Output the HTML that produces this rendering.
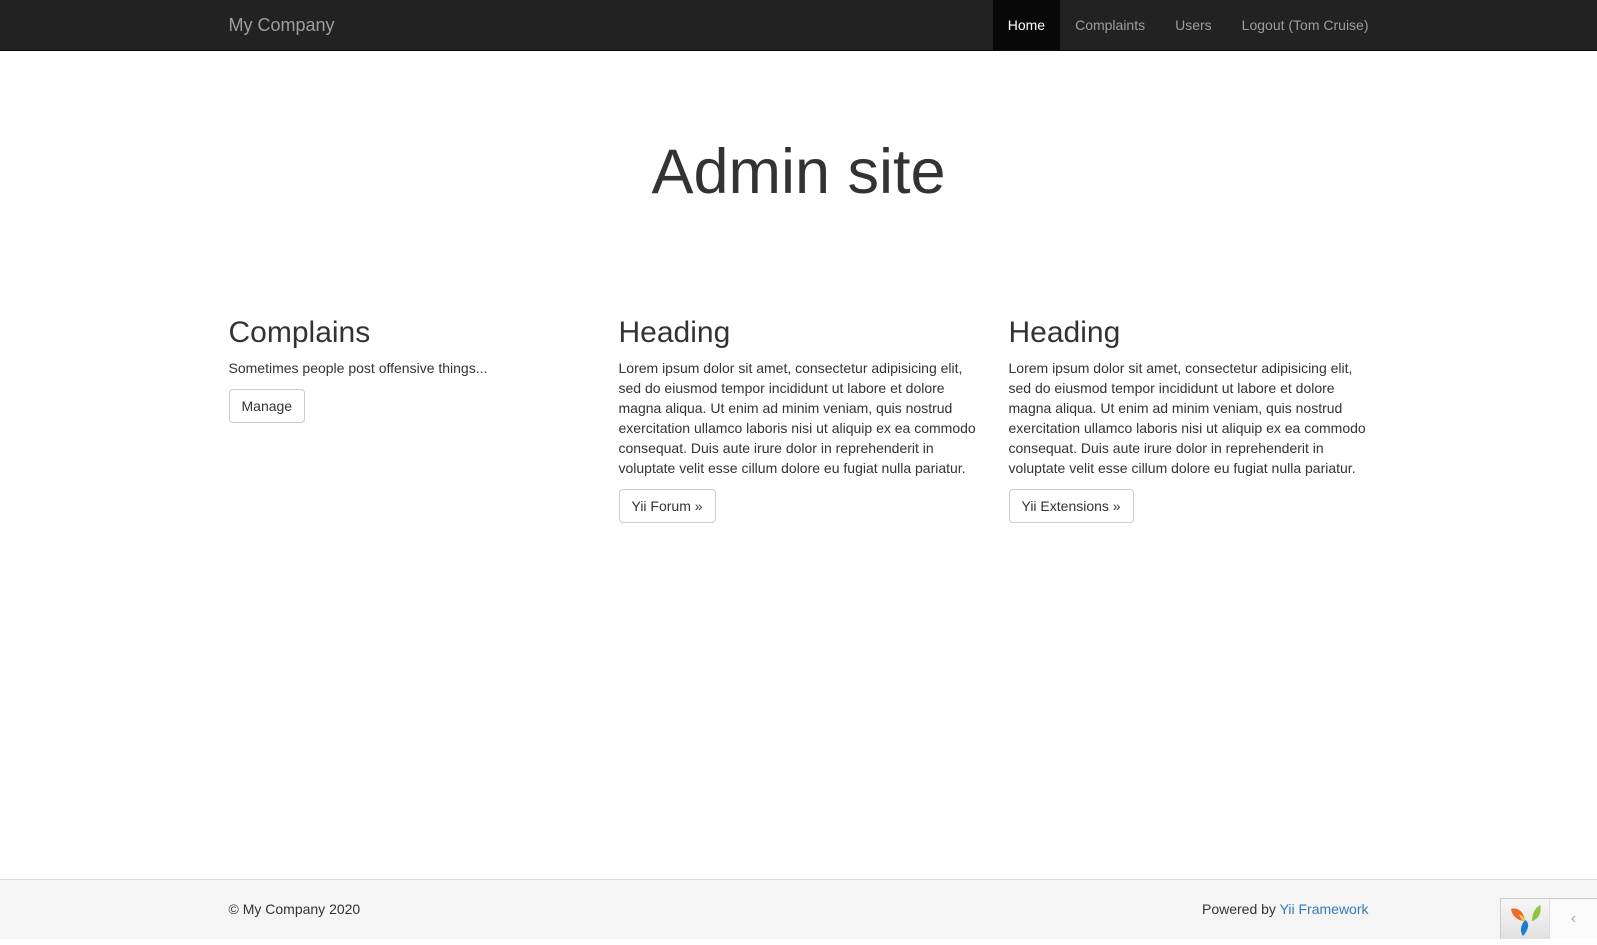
<!DOCTYPE html>
<html><head><meta charset="utf-8"><style>
*{box-sizing:border-box}
html,body{margin:0;height:100%}
body{font-family:"Liberation Sans",Helvetica,Arial,sans-serif;font-size:14px;line-height:1.42857;color:#333;background:#fff;position:relative;width:1597px;height:939px;overflow:hidden}
.nav{position:absolute;top:0;left:0;right:0;height:51px;background:#222;border-bottom:1px solid #080808}
.container{width:1170px;margin:0 auto;padding:0 15px;position:relative}
.brand{position:absolute;left:15px;top:0;height:50px;padding:15px 0;font-size:18px;line-height:20px;color:#9d9d9d}
.menu{position:absolute;right:0;top:0;display:flex}
.menu a{display:block;padding:15px;line-height:20px;color:#9d9d9d;text-decoration:none;height:50px}
.menu a.active{background:#080808;color:#fff}
.wrap{padding:70px 15px 20px}
.jumbo{text-align:center;padding:48px 0;margin-bottom:31px}
h1{font-size:63px;font-weight:500;line-height:1.1;margin:20px 0 10px}
.row{display:flex;margin:0 -15px}
.col{width:390px;padding:0 15px}
h2{font-size:30px;font-weight:500;line-height:1.1;margin:20px 0 10px}
p{margin:0 0 10px}
.btn{display:inline-block;padding:6px 12px;border:1px solid #ccc;border-radius:4px;color:#333;background:#fff;line-height:20px}
.footer{position:absolute;left:0;right:0;bottom:0;height:60px;background:#f5f5f5;border-top:1px solid #ddd;padding-top:20px}
.footer a{color:#337ab7;text-decoration:none}
.tb{position:absolute;right:0;bottom:0;height:41px;width:97px;display:flex;border:1px solid #ccc;border-right:0;border-bottom:0}
.tb div{width:48px;height:40px;background:linear-gradient(#f7f7f7,#e0e0e0)}
.tb div+div{background:#fafafa;border-left:1px solid #ddd;color:#aaa;text-align:center;line-height:40px;font-size:16px}
</style></head><body>
<div class="nav"><div class="container">
<div class="brand">My Company</div>
<div class="menu"><a class="active">Home</a><a>Complaints</a><a>Users</a><a>Logout (Tom Cruise)</a></div>
</div></div>
<div class="container wrap">
<div class="jumbo"><h1>Admin site</h1></div>
<div class="row">
<div class="col"><h2>Complains</h2><p>Sometimes people post offensive things...</p><span class="btn">Manage</span></div>
<div class="col"><h2>Heading</h2><p>Lorem ipsum dolor sit amet, consectetur adipisicing elit, sed do eiusmod tempor incididunt ut labore et dolore magna aliqua. Ut enim ad minim veniam, quis nostrud exercitation ullamco laboris nisi ut aliquip ex ea commodo consequat. Duis aute irure dolor in reprehenderit in voluptate velit esse cillum dolore eu fugiat nulla pariatur.</p><span class="btn">Yii Forum &raquo;</span></div>
<div class="col"><h2>Heading</h2><p>Lorem ipsum dolor sit amet, consectetur adipisicing elit, sed do eiusmod tempor incididunt ut labore et dolore magna aliqua. Ut enim ad minim veniam, quis nostrud exercitation ullamco laboris nisi ut aliquip ex ea commodo consequat. Duis aute irure dolor in reprehenderit in voluptate velit esse cillum dolore eu fugiat nulla pariatur.</p><span class="btn">Yii Extensions &raquo;</span></div>
</div></div>
<div class="footer"><div class="container"><span>&copy; My Company 2020</span><span style="position:absolute;right:15px;top:0">Powered by <a>Yii Framework</a></span></div></div>
<div class="tb"><div><svg width="48" height="40" viewBox="0 0 48 40"><path d="M10 10c7-2 13 3 14 12-7 0-13-5-14-12z" fill="#f06a2a"/><path d="M39 6c2 7-1 14-8 16 0-7 3-13 8-16z" fill="#8cc63f"/><path d="M24 21c4 2 5 8-2 16-3-4-3-10 2-16z" fill="#1f7bd0"/><path d="M18 15c3 1 6 4 6 7-3 0-5-3-6-7z" fill="#f6c84a"/></svg></div><div>&lsaquo;</div></div>
</body></html>
